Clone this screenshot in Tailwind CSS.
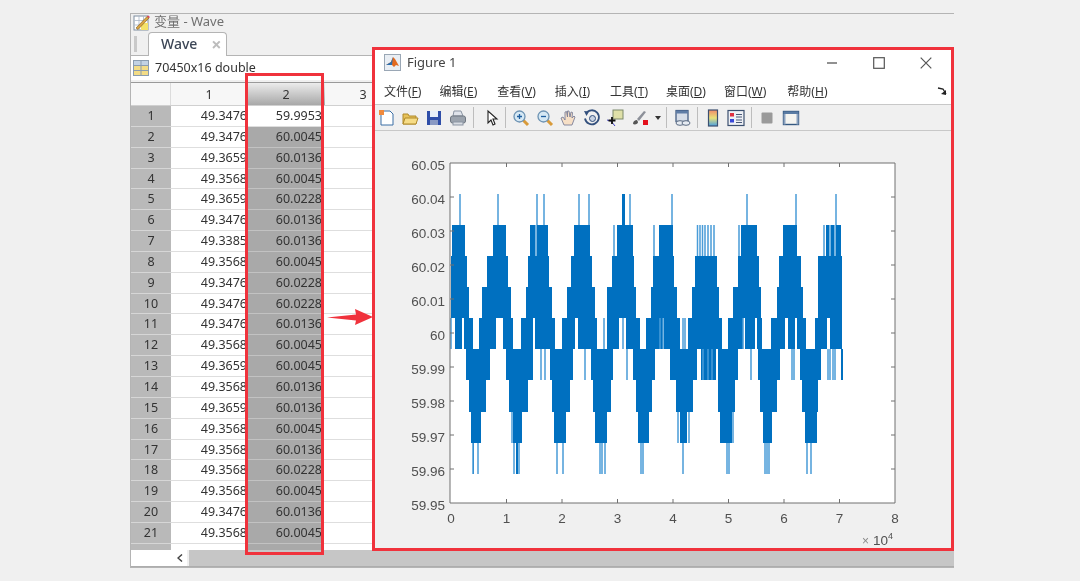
<!DOCTYPE html>
<html lang="en">
<head>
<meta charset="UTF-8">
<title>Wave - Figure 1</title>
<script src="https://cdn.jsdelivr.net/npm/@tailwindcss/browser@4"></script>
</head>
<body class="bg-[#f0f0f0]">
<div class="relative w-[1080px] h-[581px] overflow-hidden bg-[#f0f0f0] pt-[13px] pl-[130px] font-['Noto_Sans','Noto_Sans_CJK_SC',sans-serif] blur-[0.5px]">

  <!-- variable editor -->
  <div class="w-[824px] h-[555px] border border-[#b4b4b4] border-r-0 flex flex-col bg-[#f0f0f0]">
    <div class="h-[18px] flex items-center pl-[2px] gap-[4px] pb-[2px] text-[13px] text-[#707070]">
      <svg class="w-[17px] h-[17px]" viewBox="0 0 17 17"><rect x="1" y="2" width="14" height="14" fill="#fff" stroke="#7f8da0"/><path d="M1.500 6.500h14M6 2v14M10.500 2v14M1.500 11h14" stroke="#a9b6c6" stroke-width=".8"/><rect x="8" y="9" width="7" height="7" fill="#f5e26a"/><path d="M3 14 14 2.500l2 1.500L5 15.500z" fill="#d9a441" stroke="#7d5a20" stroke-width=".6"/><path d="M14 2.500l1-1 2 1.500-1 1z" fill="#e0405a"/></svg>
      <span>变量 - Wave</span>
    </div>
    <div class="h-[24px] flex items-end border-b border-[#b4b4b4]">
      <div class="w-[3px] h-[16px] mb-[3px] ml-[3px] bg-[#c9c9c9]"></div>
      <div class="ml-[11px] w-[79px] h-[24px] -mb-px bg-white border border-b-0 border-[#b4b4b4] rounded-t-[4px] flex items-center pb-[2px] pl-[12px] text-[14px] font-medium text-[#3c4656]">
        <span>Wave</span>
        <span class="ml-[14px] text-[18px] font-bold text-[#bdbdbd] leading-none">×</span>
      </div>
    </div>
    <div class="h-[24px] bg-white flex items-center pl-[2px] gap-[6px] text-[12.5px] text-[#333]">
      <svg class="w-[16px] h-[16px]" viewBox="0 0 16 16"><rect x=".5" y=".5" width="15" height="15" fill="#f3dc86" stroke="#8a9cb0"/><rect x=".5" y=".5" width="15" height="5" fill="#c2d2e4" stroke="#8a9cb0"/><path d="M8 .5v15M.5 10.500h15" stroke="#8a9cb0"/></svg>
      <span>70450x16 double</span>
    </div>
    <div class="h-[2px] bg-[#f0f0f0]"></div>

    <!-- table -->
    <div class="h-[468px] bg-white overflow-hidden border-t border-[#9a9a9a]">
      <div class="h-[23px] flex text-[12.500px] text-[#333] text-center leading-[23px] border-b border-[#d0d0d0]">
        <div class="w-[40px] bg-[#f7f7f7] border-r border-[#dcdcdc]"></div>
        <div class="w-[76px] bg-[#f7f7f7]">1</div>
        <div class="w-[78px] bg-gradient-to-b from-[#ececec] to-[#a8a8a8]">2</div>
        <div class="w-[76px] bg-[#f7f7f7]">3</div>
      </div>
      <div id="rows"></div>
    </div>

    <!-- scrollbar -->
    <div class="h-[17px] flex border-b border-[#adadad]">
      <div class="w-[56px] bg-white flex items-center justify-end pr-[4px]">
        <svg class="w-[6px] h-[8px]" viewBox="0 0 6 8"><path d="M5 .5 1 4l4 3.500" fill="none" stroke="#444" stroke-width="1.500"/></svg>
      </div>
      <div class="w-[2px] bg-[#f0f0f0]"></div>
      <div class="flex-1 bg-[#c6c6c6]"></div>
    </div>
  </div>

  <!-- highlight around column 2 -->
  <div class="absolute left-[245px] top-[73px] w-[79px] h-[482px] border-[3px] border-[#f0323c]"></div>

  <!-- arrow -->
  <svg class="absolute left-[326px] top-[305px] w-[48px] h-[24px]" viewBox="326 305 48 24"><path d="M327 317.500 356 314.500 355 309 373 317 355 325 356 320.500z" fill="#f0323c"/></svg>

  <!-- figure window -->
  <div class="absolute left-[372px] top-[47px] w-[582px] h-[504px] border-[3px] border-[#f0323c] bg-[#f0f0f0] flex flex-col">
    <div class="h-[30px] bg-white flex items-center pl-[9px] pr-[19px] pb-[5px] text-[13px] text-[#444]">
      <svg class="w-[17px] h-[17px]" viewBox="0 0 17 17"><rect x=".5" y=".5" width="16" height="16" fill="#e9eef4" stroke="#9aa7b5"/><path d="M2 11 7 8l2-5 2 2 4 7-3-1-2 2-3-3z" fill="#e2691f"/><path d="M2 11 7 8l2-5-1 8z" fill="#2a6fb0"/></svg>
      <span class="ml-[6px]">Figure 1</span>
      <svg class="w-[12px] h-[12px] ml-auto" viewBox="0 0 12 12"><path d="M1 6h10" stroke="#555" stroke-width="1.300"/></svg>
      <svg class="w-[12px] h-[12px] ml-[35px]" viewBox="0 0 12 12"><rect x=".7" y=".7" width="10.600" height="10.600" fill="none" stroke="#555" stroke-width="1.200"/></svg>
      <svg class="w-[12px] h-[12px] ml-[35px]" viewBox="0 0 12 12"><path d="M.7.7l10.600 10.600M11.300.7.700 11.300" stroke="#555" stroke-width="1.200"/></svg>
    </div>
    <div class="h-[24px] bg-white flex items-center pl-[9px] text-[12px] text-[#333] relative">
      <span>文件(<u>F</u>)</span>
      <span class="ml-[18px]">编辑(<u>E</u>)</span>
      <span class="ml-[20px]">查看(<u>V</u>)</span>
      <span class="ml-[19px]">插入(<u>I</u>)</span>
      <span class="ml-[20px]">工具(<u>T</u>)</span>
      <span class="ml-[18px]">桌面(<u>D</u>)</span>
      <span class="ml-[18px]">窗口(<u>W</u>)</span>
      <span class="ml-[21px]">帮助(<u>H</u>)</span>
      <svg class="absolute left-[562px] top-[7px] w-[10px] h-[9px]" viewBox="0 0 10 9"><path d="M1 1l5 1 3 5" fill="none" stroke="#222" stroke-width="1.300"/><path d="M4 7l5 1V3z" fill="#222"/></svg>
    </div>
    <div class="h-[27px] flex items-center border-y border-[#c8c8c8]">
      <svg class="w-[18px] h-[18px] ml-[3px]" viewBox="0 0 18 18"><path d="M3 2h9l3 3v11H3z" fill="#fff" stroke="#3a6ea5"/><rect x="1" y="1" width="5" height="5" fill="#f08a3c"/></svg>
      <svg class="w-[18px] h-[18px] ml-[5px]" viewBox="0 0 18 18"><path d="M2 5h5l1 2h7v8H2z" fill="#e7c25a" stroke="#b08a2a"/><path d="M2 15l2-6h13l-2 6z" fill="#f6dc86" stroke="#b08a2a"/></svg>
      <svg class="w-[18px] h-[18px] ml-[6px]" viewBox="0 0 18 18"><rect x="2" y="2" width="14" height="14" fill="#2f4ea8"/><rect x="5" y="2" width="8" height="6" fill="#e8eef8"/><rect x="5" y="11" width="8" height="5" fill="#8a9ac4"/></svg>
      <svg class="w-[18px] h-[18px] ml-[6px]" viewBox="0 0 18 18"><path d="M5 2h7l2 5H4z" fill="#dfe3ea" stroke="#8b95a3"/><rect x="1.500" y="7" width="15" height="7" rx="2" fill="#9ba3ad" stroke="#6f7781"/><rect x="4" y="13" width="10" height="3" fill="#d8dce2" stroke="#8b95a3"/></svg>
      <div class="w-px h-[21px] bg-[#bdbdbd] ml-[6px]"></div>
      <svg class="w-[18px] h-[18px] ml-[8px]" viewBox="0 0 18 18"><path d="M6 2v12l3-3 2 5 2-1-2-5h4z" fill="#fff" stroke="#222" stroke-width="1.100"/></svg>
      <div class="w-px h-[21px] bg-[#bdbdbd] ml-[5px]"></div>
      <svg class="w-[18px] h-[18px] ml-[6px]" viewBox="0 0 18 18"><path d="M11 11l5 5" stroke="#d89a3a" stroke-width="3"/><circle cx="7.500" cy="7.500" r="5.500" fill="#d5e8f4" stroke="#6d93b3" stroke-width="1.300"/><path d="M5 7.500h5M7.500 5v5" stroke="#1f5fa0" stroke-width="1.300"/></svg>
      <svg class="w-[18px] h-[18px] ml-[6px]" viewBox="0 0 18 18"><path d="M11 11l5 5" stroke="#d89a3a" stroke-width="3"/><circle cx="7.500" cy="7.500" r="5.500" fill="#d5e8f4" stroke="#6d93b3" stroke-width="1.300"/><path d="M5 7.500h5" stroke="#1f5fa0" stroke-width="1.300"/></svg>
      <svg class="w-[18px] h-[18px] ml-[5px]" viewBox="0 0 18 18"><path d="M5 16 2 9l2-1 2 3V3l1.500-.5L8.500 8V2l1.500 0 1 6 1-5 1.500.5L13 9l2-2 1 1-3 8z" fill="#f6dfc6" stroke="#7a7f99" stroke-width=".9"/></svg>
      <svg class="w-[18px] h-[18px] ml-[6px]" viewBox="0 0 18 18"><path d="M3 4.500a7 7 0 1 1-1 5" fill="none" stroke="#33507d" stroke-width="1.800"/><path d="M1 2l5 .5L3.500 7z" fill="#33507d"/><circle cx="9.500" cy="9.500" r="3" fill="#c7d2e2" stroke="#33507d"/></svg>
      <svg class="w-[18px] h-[18px] ml-[5px]" viewBox="0 0 18 18"><rect x="7" y="1" width="10" height="9" fill="#dfe0a8" stroke="#7d8a6a"/><path d="M1 11l4 1 4 5" fill="none" stroke="#3b3bc4"/><path d="M6 8v7M2.500 11.500h7" stroke="#111" stroke-width="1.800"/></svg>
      <svg class="w-[18px] h-[18px] ml-[7px]" viewBox="0 0 18 18"><path d="M2 15c0-3 2-4 4-4l1 2c0 2-3 3-5 2z" fill="#555"/><path d="M6 10l7-8 2 1-7 9z" fill="#8c9099"/><rect x="12" y="11" width="5" height="5" fill="#e3101c"/></svg>
      <svg class="w-[6px] h-[4px] ml-[6px]" viewBox="0 0 6 4"><path d="M0 0h6L3 4z" fill="#333"/></svg>
      <div class="w-px h-[21px] bg-[#bdbdbd] ml-[5px]"></div>
      <svg class="w-[18px] h-[18px] ml-[6px]" viewBox="0 0 18 18"><rect x="3" y="1.500" width="12" height="11" fill="#d6dde8" stroke="#38537a" stroke-width="1.200"/><rect x="3" y="1.500" width="12" height="3" fill="#5f7da6"/><ellipse cx="7" cy="14" rx="4" ry="2.300" fill="#e6ebf2" stroke="#5b6b82"/><ellipse cx="13" cy="14" rx="4" ry="2.300" fill="#e6ebf2" stroke="#5b6b82"/></svg>
      <div class="w-px h-[21px] bg-[#bdbdbd] ml-[6px]"></div>
      <svg class="w-[18px] h-[18px] ml-[6px]" viewBox="0 0 18 18"><defs><linearGradient id="cb" x1="0" y1="0" x2="0" y2="1"><stop offset="0" stop-color="#f08a6a"/><stop offset=".5" stop-color="#e8e27a"/><stop offset="1" stop-color="#4aa0e0"/></linearGradient></defs><rect x="4.500" y="1" width="9" height="16" fill="url(#cb)" stroke="#3c5070" stroke-width="1.200"/></svg>
      <svg class="w-[18px] h-[18px] ml-[5px]" viewBox="0 0 18 18"><rect x="1" y="1.500" width="16" height="15" fill="#eef0f5" stroke="#3c5070" stroke-width="1.200"/><rect x="3" y="4" width="4" height="3.500" fill="#e03040"/><rect x="3" y="10" width="4" height="3.500" fill="#3848d8"/><path d="M9 5.500h6M9 8h6M9 11h6M9 13.500h6" stroke="#4a5a78"/></svg>
      <div class="w-px h-[21px] bg-[#bdbdbd] ml-[6px]"></div>
      <svg class="w-[18px] h-[18px] ml-[6px]" viewBox="0 0 18 18"><rect x="3.500" y="3.500" width="11" height="11" rx="1" fill="#9a9a9a"/></svg>
      <svg class="w-[18px] h-[18px] ml-[6px]" viewBox="0 0 18 18"><rect x="1.500" y="2.500" width="15" height="13" fill="#f4f4f0" stroke="#345880" stroke-width="1.400"/><rect x="1.500" y="2.500" width="15" height="2.500" fill="#5a7ca4"/><rect x="1.500" y="5" width="2" height="10.500" fill="#8ba2bf"/><rect x="14.500" y="5" width="2" height="10.500" fill="#8ba2bf"/></svg>
    </div>

    <!-- plot, drawn in page coordinates -->
    <svg id="plot" class="w-[576px] h-[417px]" viewBox="375 131 576 417"></svg>
  </div>
</div>

<script>
  // table rows
  const rows = [
    ['49.3476','59.9953'],['49.3476','60.0045'],['49.3659','60.0136'],['49.3568','60.0045'],
    ['49.3659','60.0228'],['49.3476','60.0136'],['49.3385','60.0136'],['49.3568','60.0045'],
    ['49.3476','60.0228'],['49.3476','60.0228'],['49.3476','60.0136'],['49.3568','60.0045'],
    ['49.3659','60.0045'],['49.3568','60.0136'],['49.3659','60.0136'],['49.3568','60.0045'],
    ['49.3568','60.0136'],['49.3568','60.0228'],['49.3568','60.0045'],['49.3476','60.0136'],
    ['49.3568','60.0045'],['','']
  ];
  document.getElementById('rows').innerHTML = rows.map((r, i) => `
    <div class="h-[20.85px] flex text-[12.500px] leading-[20px] text-[#333]">
      <div class="w-[40px] bg-[#b9b9b9] border-b border-[#d6d6d6] text-center">${r[0] ? i + 1 : ''}</div>
      <div class="w-[76px] border-b border-[#dedede] text-right">${r[0]}</div>
      <div class="w-[77px] border-b pr-[2px] text-right ${i === 0 ? 'bg-white border-[#dedede]' : 'bg-[#a9a9a9] border-[#c2c2c2]'}">${r[1]}</div>
      <div class="w-[77px] border-b border-[#dedede]"></div>
    </div>`).join('');

  // plot: [x1, x2] blocks per level; y levels are 31px apart
  const levels = [194, 225, 256, 287, 318, 349, 380, 412, 443, 474];
  const solid = [];
  const light = [];
  const band = (y, list) => list.forEach(b => solid.push([b[0], b[1], levels[y], levels[y + 1]]));
  const lines = (y, list) => list.forEach(x => light.push([x, levels[y], levels[y + 1]]));

  band(1, [[452,465],[493,506],[530,535],[537,548],[574,590],[617,633],[659,673],[741,757],[783,797],[826,829],[831,834],[836,841]]);
  band(2, [[451,467],[487,508],[528,549],[571,592],[612,634],[653,674],[695,717],[738,759],[779,801],[818,842]]);
  band(3, [[451,469],[482,511],[526,552],[567,595],[607,636],[651,677],[692,719],[733,761],[777,803],[818,842]]);
  band(4, [[455,462],[464,473],[479,496],[503,513],[521,533],[535,555],[562,575],[578,597],[607,619],[626,640],[646,663],[664,680],[688,722],[728,743],[745,755],[757,762],[771,785],[788,795],[797,806],[815,827],[830,842]]);
  band(5, [[466,490],[506,533],[550,573],[591,613],[633,655],[670,697],[701,716],[718,738],[758,780],[800,821],[841,843]]);
  band(6, [[469,486],[509,528],[552,570],[593,611],[636,652],[676,693],[718,735],[760,777],[802,818]]);
  band(7, [[471,481],[513,522],[554,566],[595,607],[638,649],[680,687],[720,732],[763,772],[805,817]]);
  band(8, [[473,474]]);
  solid.push([622, 625, 194, 225]);
  solid.push([516, 518, 443, 474]);

  lines(0, [460,498,537,544,579,589,630,672,747,796,836]);
  lines(1, [536,614,654,697.500,700,702.500,705,708,711,714,739,824,830,835]);
  lines(4, [451,604,623,660,663,683,685,743]);
  lines(5, [541,545,585,627,703,708,712,751,792,794,828,830,833,835]);
  lines(7, [512,678,689,733]);
  lines(8, [473,478,514,519,557,563,600,602,605,641,643,683,727,729,765,767,769,807,811]);

  const rect = b => `M${b[0]} ${b[2]}H${b[1]}V${b[3]}H${b[0]}Z`;
  const line = l => `M${l[0]} ${l[1]}V${l[2]}`;
  const xAt = n => 451 + n * 55.5;
  const yAt = n => 163 + n * 34;
  let ticks = '';
  let labels = '';
  ['0','1','2','3','4','5','6','7','8'].forEach((t, n) => {
    if (n > 0 && n < 8) ticks += `M${xAt(n)} 163v4M${xAt(n)} 503v-4`;
    labels += `<text x="${xAt(n)}" y="523" text-anchor="middle">${t}</text>`;
  });
  ['60.05','60.04','60.03','60.02','60.01','60','59.99','59.98','59.97','59.96','59.95'].forEach((t, n) => {
    if (n > 0 && n < 10) ticks += `M450 ${yAt(n)}h4M895 ${yAt(n)}h-4`;
    labels += `<text x="445" y="${yAt(n) + 6.5}" text-anchor="end">${t}</text>`;
  });

  document.getElementById('plot').innerHTML = `
    <rect x="450" y="163" width="445" height="340" fill="#fff"/>
    <path d="${solid.map(rect).join('')}" fill="#0070c0"/>
    <path d="${light.map(line).join('')}" stroke="#4a9cd8" stroke-width="1.500" fill="none"/>
    <path d="M450 503V163H895V503Z${ticks}" stroke="#707070" fill="none"/>
    <g font-family="Liberation Sans" font-size="13.500" fill="#505050">
      ${labels}
      <text x="862" y="545" font-size="12" fill="#8a8a8a">×</text>
      <text x="873" y="545">10</text>
      <text x="888" y="539" font-size="9">4</text>
    </g>`;
</script>
</body>
</html>
